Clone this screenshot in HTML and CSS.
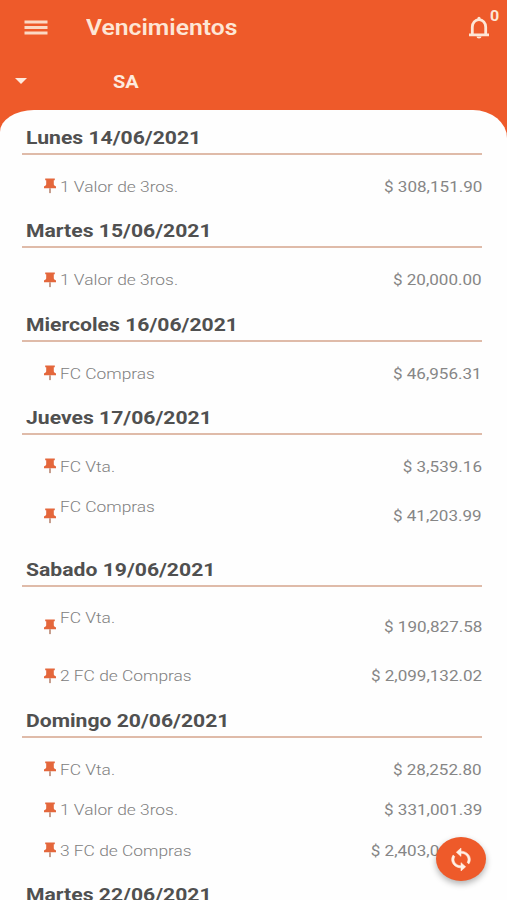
FILE: index.html
```html
<!DOCTYPE html>
<html lang="es">
<head>
<meta charset="utf-8">
<title>Vencimientos</title>
<link rel="stylesheet" href="styles.css">
</head>
<body>
<svg width="0" height="0" class="defs">
  <symbol id="pin" viewBox="0 0 12 16">
    <path class="pin-head" d="M1.200 0.400h9.600v1.900h-1v4.300c.5 1 1.200 1.500 2.200 1.900v1.700H0V8.500c1-.4 1.700-.9 2.200-1.900V2.300h-1z"/>
    <path class="pin-needle" d="M5.200 10.200h1.600v4.200L6 15.400l-.8-1z"/>
  </symbol>
</svg>
<div class="app">
  <header class="bar">
    <svg class="menu" viewBox="0 0 24 16"><path d="M.5 2h23M.5 7.500h23M.5 13h23"/></svg>
    <h1><span class="wide">Vencimientos</span></h1>
    <div class="bell">
      <svg viewBox="0 0 22 24"><path class="bell-body" d="M1 18.800h20M4.300 18.500V11c0-4 2.700-7.300 6.700-7.300s6.700 3.300 6.700 7.300v7.500"/><path class="bell-dot" d="M9.400 3V2.200a1.600 1.500 0 0 1 3.200 0V3zM8.500 20.600h5a2.500 2 0 0 1-5 0z"/></svg>
      <span class="count wide">0</span>
    </div>
  </header>
  <div class="company">
    <i class="caret"></i>
    <span class="wide">SA</span>
  </div>
  <main class="panel">
    <section>
      <h2><span class="wide">Lunes 14/06/2021</span></h2>
      <div class="row"><svg class="pin"><use href="#pin"/></svg><span class="label wide">1 Valor de 3ros.</span><span class="amount wide">$ 308,151.90</span></div>
    </section>
    <section>
      <h2><span class="wide">Martes 15/06/2021</span></h2>
      <div class="row"><svg class="pin"><use href="#pin"/></svg><span class="label wide">1 Valor de 3ros.</span><span class="amount wide">$ 20,000.00</span></div>
    </section>
    <section>
      <h2><span class="wide">Miercoles 16/06/2021</span></h2>
      <div class="row"><svg class="pin"><use href="#pin"/></svg><span class="label wide">FC Compras</span><span class="amount wide">$ 46,956.31</span></div>
    </section>
    <section>
      <h2><span class="wide">Jueves 17/06/2021</span></h2>
      <div class="row"><svg class="pin"><use href="#pin"/></svg><span class="label wide">FC Vta.</span><span class="amount wide">$ 3,539.16</span></div>
      <div class="row tall"><svg class="pin"><use href="#pin"/></svg><span class="label wide">FC Compras</span><span class="amount wide">$ 41,203.99</span></div>
    </section>
    <section>
      <h2><span class="wide">Sabado 19/06/2021</span></h2>
      <div class="row tall"><svg class="pin"><use href="#pin"/></svg><span class="label wide">FC Vta.</span><span class="amount wide">$ 190,827.58</span></div>
      <div class="row"><svg class="pin"><use href="#pin"/></svg><span class="label wide">2 FC de Compras</span><span class="amount wide">$ 2,099,132.02</span></div>
    </section>
    <section>
      <h2><span class="wide">Domingo 20/06/2021</span></h2>
      <div class="row"><svg class="pin"><use href="#pin"/></svg><span class="label wide">FC Vta.</span><span class="amount wide">$ 28,252.80</span></div>
      <div class="row"><svg class="pin"><use href="#pin"/></svg><span class="label wide">1 Valor de 3ros.</span><span class="amount wide">$ 331,001.39</span></div>
      <div class="row"><svg class="pin"><use href="#pin"/></svg><span class="label wide">3 FC de Compras</span><span class="amount wide">$ 2,403,0</span></div>
    </section>
    <section>
      <h2><span class="wide">Martes 22/06/2021</span></h2>
    </section>
  </main>
  <button class="fab" aria-label="Actualizar">
    <svg viewBox="0 0 24 24" preserveAspectRatio="none"><path d="M12 4V1L8 5l4 4V6c3.310 0 6 2.690 6 6 0 1.010-.25 1.970-.7 2.800l1.460 1.460C19.540 15.030 20 13.570 20 12c0-4.420-3.580-8-8-8zm0 14c-3.310 0-6-2.690-6-6 0-1.010.25-1.970.7-2.800L5.240 7.740C4.460 8.970 4 10.430 4 12c0 4.420 3.580 8 8 8v3l4-4-4-4v3z"/></svg>
  </button>
</div>
</body>
</html>
```
FILE: styles.css
```css
* { box-sizing: border-box; }
body { margin: 0; font-family: Roboto, "Liberation Sans", sans-serif; }
.defs { position: absolute; }
.app {
  position: relative;
  width: 507px;
  height: 900px;
  overflow: hidden;
  background: #ee5a2a;
}
.wide { display: inline-block; transform: scaleX(1.143); transform-origin: left center; white-space: nowrap; }
.bar { display: flex; align-items: center; height: 54px; padding-left: 24px; color: #fde6d6; }
.menu { width: 24px; height: 16px; margin-top: 1px; fill: none; stroke: #fbd9c4; stroke-width: 3; }
h1 { margin: 1px 0 0 37.500px; font-size: 21.500px; font-weight: 600; line-height: 54px; }
h1 .wide { transform: scaleX(1.148); }
.bell { position: relative; margin: 1px 17px 0 auto; width: 22px; height: 24px; }
.bell svg { display: block; width: 22px; height: 24px; }
.bell-body { fill: none; stroke: #fde6d6; stroke-width: 2.800; }
.bell-dot { fill: #fde6d6; }
.count { position: absolute; left: 22px; top: -8px; font-size: 14px; line-height: 16px; font-weight: 700; }
.company { display: flex; align-items: center; height: 56px; padding-left: 15px; color: #fdeade; font-size: 17.500px; font-weight: 700; }
.caret { width: 12px; height: 6px; margin: -2px 86px 0 0; background: #fdeade; clip-path: polygon(0 0, 100% 0, 50% 100%); }
.panel {
  height: 790px;
  padding: 4px 25px 0 22px;
  background: #fefefe;
  border-radius: 34px 34px 0 0 / 22px 28px 0 0;
  overflow: hidden;
}
h2 {
  height: 41px;
  margin: 0 0 11.500px;
  padding: 13px 0 0 4px;
  border-bottom: 2px solid #dfbba9;
  color: #505050;
  font-size: 18.500px;
  font-weight: 700;
  line-height: 22px;
}
section { padding-bottom: .4px; }
.row { display: flex; align-items: center; height: 40.500px; padding-left: 22px; color: #808080; font-size: 15.500px; line-height: 40px; }
.tall { height: 58px; }
.tall .label { align-self: flex-start; }
.label { font-weight: 300; transform: scaleX(1.12); }
.pin { flex: none; width: 12px; height: 16px; margin: -1px 3.700px 0 0; }
.pin-head { fill: #e4673c; }
.pin-needle { fill: #b88672; }
.amount { margin-left: auto; transform: scaleX(1.1); transform-origin: right center; color: #868686; }
section:nth-child(6) .row:last-child .amount { margin-right: 43px; }
.fab {
  position: absolute;
  left: 436px;
  top: 837px;
  display: flex;
  align-items: center;
  justify-content: center;
  width: 50px;
  height: 44px;
  padding: 0;
  border: 0;
  border-radius: 50%;
  background: #ee5a2a;
  box-shadow: 0 3px 6px rgba(0, 0, 0, .3);
}
.fab svg { width: 28px; height: 25px; fill: #fff0e6; stroke: #fff0e6; stroke-width: .5; }
```
